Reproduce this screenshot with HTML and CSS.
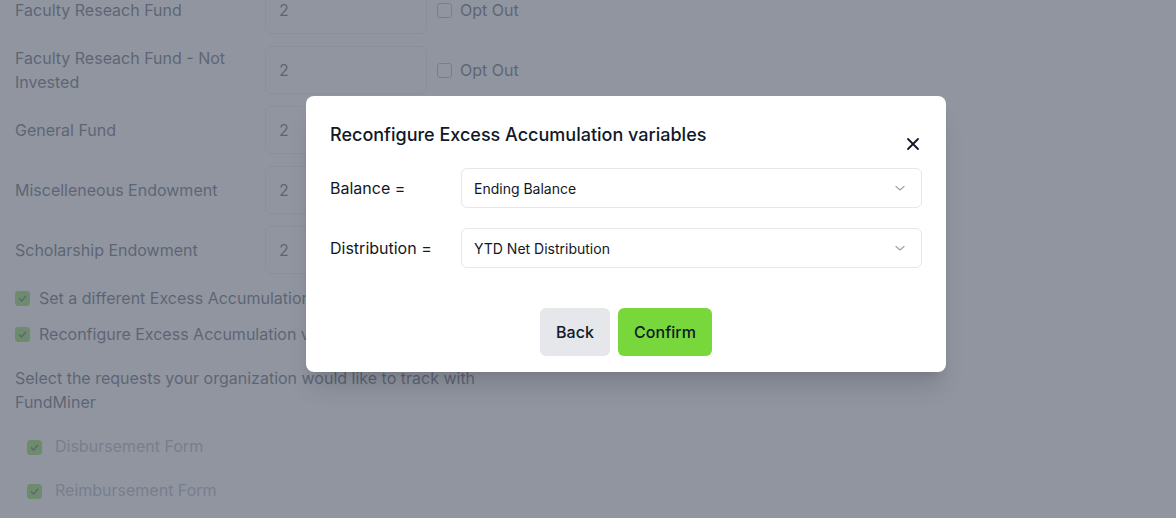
FILE: index.html
```html
<!DOCTYPE html>
<html lang="en">
<head>
<meta charset="utf-8">
<title>Settings</title>
<link rel="stylesheet" href="styles.css">
</head>
<body>
<main class="page">
  <div class="fund-rows">
    <div class="fund-row">
      <div class="fund-label">Faculty Reseach Fund</div>
      <input class="fund-input" type="text" value="2">
      <label class="opt"><input type="checkbox" class="cb"><span>Opt Out</span></label>
    </div>
    <div class="fund-row">
      <div class="fund-label">Faculty Reseach Fund - Not Invested</div>
      <input class="fund-input" type="text" value="2">
      <label class="opt"><input type="checkbox" class="cb"><span>Opt Out</span></label>
    </div>
    <div class="fund-row">
      <div class="fund-label">General Fund</div>
      <input class="fund-input" type="text" value="2">
      <label class="opt"><input type="checkbox" class="cb"><span>Opt Out</span></label>
    </div>
    <div class="fund-row">
      <div class="fund-label">Miscelleneous Endowment</div>
      <input class="fund-input" type="text" value="2">
      <label class="opt"><input type="checkbox" class="cb"><span>Opt Out</span></label>
    </div>
    <div class="fund-row">
      <div class="fund-label">Scholarship Endowment</div>
      <input class="fund-input" type="text" value="2">
      <label class="opt"><input type="checkbox" class="cb"><span>Opt Out</span></label>
    </div>
  </div>

  <div class="checks">
    <label class="check"><input type="checkbox" class="cb" checked><span>Set a different Excess Accumulation threshold for each fund</span></label>
    <label class="check"><input type="checkbox" class="cb" checked><span>Reconfigure Excess Accumulation variables</span></label>
  </div>

  <p class="intro">Select the requests your organization would like to track with FundMiner</p>

  <div class="requests">
    <label class="check req"><input type="checkbox" class="cb" checked><span>Disbursement Form</span></label>
    <label class="check req"><input type="checkbox" class="cb" checked><span>Reimbursement Form</span></label>
  </div>
</main>

<div class="overlay"></div>

<div class="modal-wrap">
  <div class="modal" role="dialog">
    <h2 class="modal-title">Reconfigure Excess Accumulation variables</h2>
    <button class="close" aria-label="Close">
      <svg width="14" height="14" viewBox="0 0 14 14"><path d="M2 2 L12 12 M12 2 L2 12" stroke="#111827" stroke-width="1.8" stroke-linecap="round"/></svg>
    </button>
    <div class="field">
      <span class="field-label">Balance =</span>
      <div class="select"><span>Ending Balance</span>
        <svg width="12" height="12" viewBox="0 0 12 12"><path d="M2 4.5 L6 8 L10 4.5" fill="none" stroke="#9ca3af" stroke-width="1.2" stroke-linecap="round" stroke-linejoin="round"/></svg>
      </div>
    </div>
    <div class="field">
      <span class="field-label">Distribution =</span>
      <div class="select"><span>YTD Net Distribution</span>
        <svg width="12" height="12" viewBox="0 0 12 12"><path d="M2 4.5 L6 8 L10 4.5" fill="none" stroke="#9ca3af" stroke-width="1.2" stroke-linecap="round" stroke-linejoin="round"/></svg>
      </div>
    </div>
    <div class="actions">
      <button class="btn btn-back">Back</button>
      <button class="btn btn-confirm">Confirm</button>
    </div>
  </div>
</div>
</body>
</html>
```

FILE: styles.css
```css
* { box-sizing: border-box; }
html, body { margin: 0; padding: 0; }
body {
  font-family: Inter, "Noto Sans", "Liberation Sans", sans-serif;
  color: #374151;
  background: #ffffff;
  width: 1176px;
  height: 518px;
  overflow: hidden;
  position: relative;
}
.page {
  padding: 0 15px;
  margin-top: -14px;
}
.fund-rows {
  display: flex;
  flex-direction: column;
  gap: 12px;
}
.fund-row {
  display: grid;
  grid-template-columns: 240px 162px auto;
  align-items: center;
  column-gap: 10px;
}
.fund-label {
  font-size: 16px;
  line-height: 24px;
  padding-right: 4px;
}
.fund-input {
  height: 48px;
  width: 162px;
  border: 1px solid #e5e7eb;
  border-radius: 6px;
  padding: 0 13px;
  font: inherit;
  font-size: 16px;
  color: #374151;
  background: #fff;
  outline: none;
}
.opt {
  display: flex;
  align-items: center;
  gap: 8px;
  font-size: 16px;
  line-height: 24px;
}
.cb {
  appearance: none;
  -webkit-appearance: none;
  margin: 0;
  width: 15px;
  height: 15px;
  border: 1px solid #9ca3af;
  border-radius: 3px;
  background: #fff;
  flex: none;
}
.cb:checked {
  border-color: #78d83b;
  background-color: #78d83b;
  background-image: url("data:image/svg+xml,%3Csvg xmlns='http://www.w3.org/2000/svg' viewBox='0 0 16 16'%3E%3Cpath d='M4 8.3 L6.8 11 L12 5.2' fill='none' stroke='%23374151' stroke-width='1.8' stroke-linecap='round' stroke-linejoin='round'/%3E%3C/svg%3E");
  background-size: 100% 100%;
}
.checks {
  display: flex;
  flex-direction: column;
  gap: 12px;
  margin-top: 12px;
}
.check {
  display: flex;
  align-items: center;
  gap: 9px;
  font-size: 16px;
  line-height: 24px;
  white-space: nowrap;
}
.intro {
  margin: 20px 0 0;
  width: 480px;
  font-size: 16px;
  line-height: 24px;
}
.requests {
  display: flex;
  flex-direction: column;
  gap: 20px;
  margin-top: 20px;
  padding-left: 12px;
}
.req { color: #9ca3af; gap: 13px; }
.req .cb { margin-top: 2px; }

.overlay {
  position: absolute;
  inset: 0;
  background: rgba(107, 114, 128, 0.75);
}
.modal-wrap {
  position: absolute;
  left: 306px;
  top: 96px;
}
.modal {
  position: relative;
  width: 640px;
  background: #fff;
  border-radius: 8px;
  padding: 25px 24px 16px;
  box-shadow: 0 20px 25px -5px rgba(0,0,0,0.12), 0 8px 10px -6px rgba(0,0,0,0.1);
}
.modal-title {
  margin: 0;
  font-size: 18px;
  line-height: 28px;
  font-weight: 500;
  color: #111827;
}
.close {
  position: absolute;
  top: 36px;
  right: 21px;
  width: 24px;
  height: 24px;
  padding: 0;
  border: 0;
  background: transparent;
  display: flex;
  align-items: center;
  justify-content: center;
}
.field {
  display: grid;
  grid-template-columns: 131px 1fr;
  align-items: center;
  margin-top: 19px;
}
.field + .field { margin-top: 20px; }
.field-label {
  font-size: 16px;
  line-height: 24px;
  color: #111827;
}
.select {
  height: 40px;
  border: 1px solid #e5e7eb;
  border-radius: 6px;
  display: flex;
  align-items: center;
  justify-content: space-between;
  padding: 0 15px 0 12px;
  font-size: 14px;
  color: #111827;
}
.actions {
  display: flex;
  justify-content: center;
  gap: 8px;
  margin-top: 40px;
}
.btn {
  height: 48px;
  border: 0;
  border-radius: 6px;
  font-family: inherit;
  font-size: 16px;
  font-weight: 500;
  color: #111827;
  padding: 0 16px;
}
.btn-back { background: #e5e7eb; width: 70px; }
.btn-confirm { background: #78d83b; width: 94px; }
```
